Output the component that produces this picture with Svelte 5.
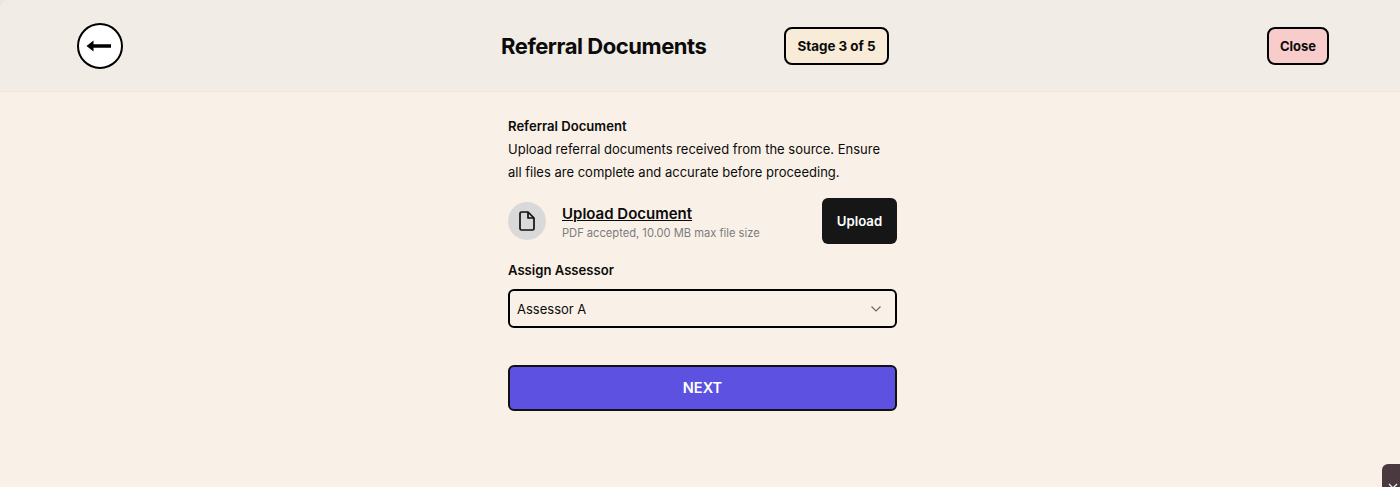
<script>
  let title = "Referral Documents";
  let stage = 3;
  let stageCount = 5;
  let assessor = "Assessor A";
</script>

<div class="page">
  <header class="topbar">
    <button class="back" aria-label="Back">
      <svg class="arrow" width="26" height="14" viewBox="0 0 26 14">
        <path d="M25 7H7" stroke="#000" stroke-width="3.6" fill="none" />
        <path d="M0.5 7 L7.5 1.5 V12.5 Z" fill="#000" />
      </svg>
    </button>
    <div class="title-wrap">
      <h1>{title}</h1>
      <span class="stage">Stage {stage} of {stageCount}</span>
    </div>
    <button class="close">Close</button>
  </header>

  <main class="content">
    <section class="form">
      <div class="intro">
        <div class="label">Referral Document</div>
        <p>Upload referral documents received from the source. Ensure all files are complete and accurate before proceeding.</p>
      </div>

      <div class="upload-row">
        <div class="file-icon">
          <svg width="18" height="20" viewBox="0 0 18 20" fill="none" stroke="#111" stroke-width="1.7" stroke-linejoin="round">
            <path d="M2 2.5 a1.5 1.5 0 0 1 1.5-1.5 h6.5 l6 6 v10.5 a1.5 1.5 0 0 1-1.5 1.5 h-11 a1.5 1.5 0 0 1-1.5-1.5 z" />
            <path d="M10 1 v6 h6" />
          </svg>
        </div>
        <div class="upload-text">
          <div class="upload-title">Upload Document</div>
          <div class="upload-hint">PDF accepted, 10.00 MB max file size</div>
        </div>
        <button class="upload-btn">Upload</button>
      </div>

      <div class="label assign">Assign Assessor</div>
      <div class="select">
        <span>{assessor}</span>
        <svg width="12" height="8" viewBox="0 0 12 8" fill="none" stroke="#666" stroke-width="1.1">
          <path d="M1.5 1.5 L6 6 L10.5 1.5" />
        </svg>
      </div>

      <button class="next">NEXT</button>
    </section>
  </main>

  <div class="corner-widget">
    <svg width="10" height="10" viewBox="0 0 10 10" stroke="#f3eeea" stroke-width="1.3">
      <path d="M1 1 L9 9 M9 1 L1 9" />
    </svg>
  </div>
</div>

<style>
  :global(body) {
    margin: 0;
    background: #e9e7e4;
  }

  .page {
    position: relative;
    height: 487px;
    overflow: hidden;
    background: #f9f1e7;
    font-family: Inter, "Liberation Sans", sans-serif;
    color: #0b0b0b;
    border-top-left-radius: 10px;
  }

  .topbar {
    box-sizing: border-box;
    height: 92px;
    display: flex;
    align-items: center;
    justify-content: space-between;
    padding: 0 71px 0 77px;
    background: #f1ece5;
    border-bottom: 1px solid #ece7e0;
  }

  .back {
    box-sizing: border-box;
    width: 46px;
    height: 46px;
    padding: 0;
    display: flex;
    align-items: center;
    justify-content: center;
    background: #fff;
    border: 2px solid #000;
    border-radius: 50%;
  }

  .arrow {
    margin-left: -1px;
    margin-right: 1px;
  }

  .title-wrap {
    display: flex;
    align-items: center;
    gap: 78px;
    margin-left: 378px;
    margin-right: auto;
  }

  h1 {
    margin: 0;
    font-size: 22px;
    font-weight: 700;
    letter-spacing: -0.45px;
    white-space: nowrap;
  }

  .stage {
    box-sizing: border-box;
    height: 38px;
    padding: 0 11px;
    display: flex;
    align-items: center;
    background: #f8ebd8;
    border: 2px solid #000;
    border-radius: 8px;
    font-size: 13.4px;
    font-weight: 700;
  }

  .close {
    box-sizing: border-box;
    width: 62px;
    height: 38px;
    padding: 0;
    background: #f9cccc;
    border: 2px solid #000;
    border-radius: 8px;
    font: 700 13px Inter, "Liberation Sans", sans-serif;
    color: #0b0b0b;
  }

  .content {
    display: flex;
    justify-content: center;
    padding: 25px 0 0 5px;
  }

  .form {
    width: 389px;
    display: flex;
    flex-direction: column;
  }

  .label {
    font-size: 13.1px;
    font-weight: 600;
    line-height: 18px;
  }

  .intro p {
    margin: 0;
    font-size: 13px;
    line-height: 23px;
    padding-top: 3px;
    width: 380px;
  }

  .upload-row {
    display: flex;
    align-items: center;
    margin-top: 14px;
  }

  .file-icon {
    width: 38px;
    height: 38px;
    flex: none;
    display: flex;
    align-items: center;
    justify-content: center;
    background: #d9d9d9;
    border-radius: 50%;
  }

  .upload-text {
    margin-left: 16px;
    padding-top: 3px;
    flex: 1;
  }

  .upload-title {
    font-size: 15px;
    font-weight: 600;
    line-height: 18px;
    text-decoration: underline;
  }

  .upload-hint {
    font-size: 11.15px;
    line-height: 16px;
    margin-top: 2px;
    color: #7b7b80;
  }

  .upload-btn {
    width: 75px;
    height: 46px;
    padding: 0;
    background: #161616;
    color: #fff;
    border: none;
    border-radius: 6px;
    font: 600 13.2px Inter, "Liberation Sans", sans-serif;
  }

  .assign {
    margin-top: 17px;
  }

  .select {
    box-sizing: border-box;
    height: 39px;
    margin-top: 10px;
    padding: 0 13px 0 7px;
    display: flex;
    align-items: center;
    justify-content: space-between;
    border: 2px solid #000;
    border-radius: 6px;
    font-size: 13px;
  }

  .next {
    height: 46px;
    margin-top: 37px;
    padding: 0;
    background: #5c51e0;
    color: #fff;
    border: 2px solid #111;
    border-radius: 6px;
    font: 600 14.6px Inter, "Liberation Sans", sans-serif;
  }

  .corner-widget {
    position: absolute;
    left: 1382px;
    top: 464px;
    width: 28px;
    height: 32px;
    background: #4a3a40;
    border-radius: 6px 0 0 0;
    padding: 13px 0 0 6px;
    box-sizing: border-box;
  }
</style>
